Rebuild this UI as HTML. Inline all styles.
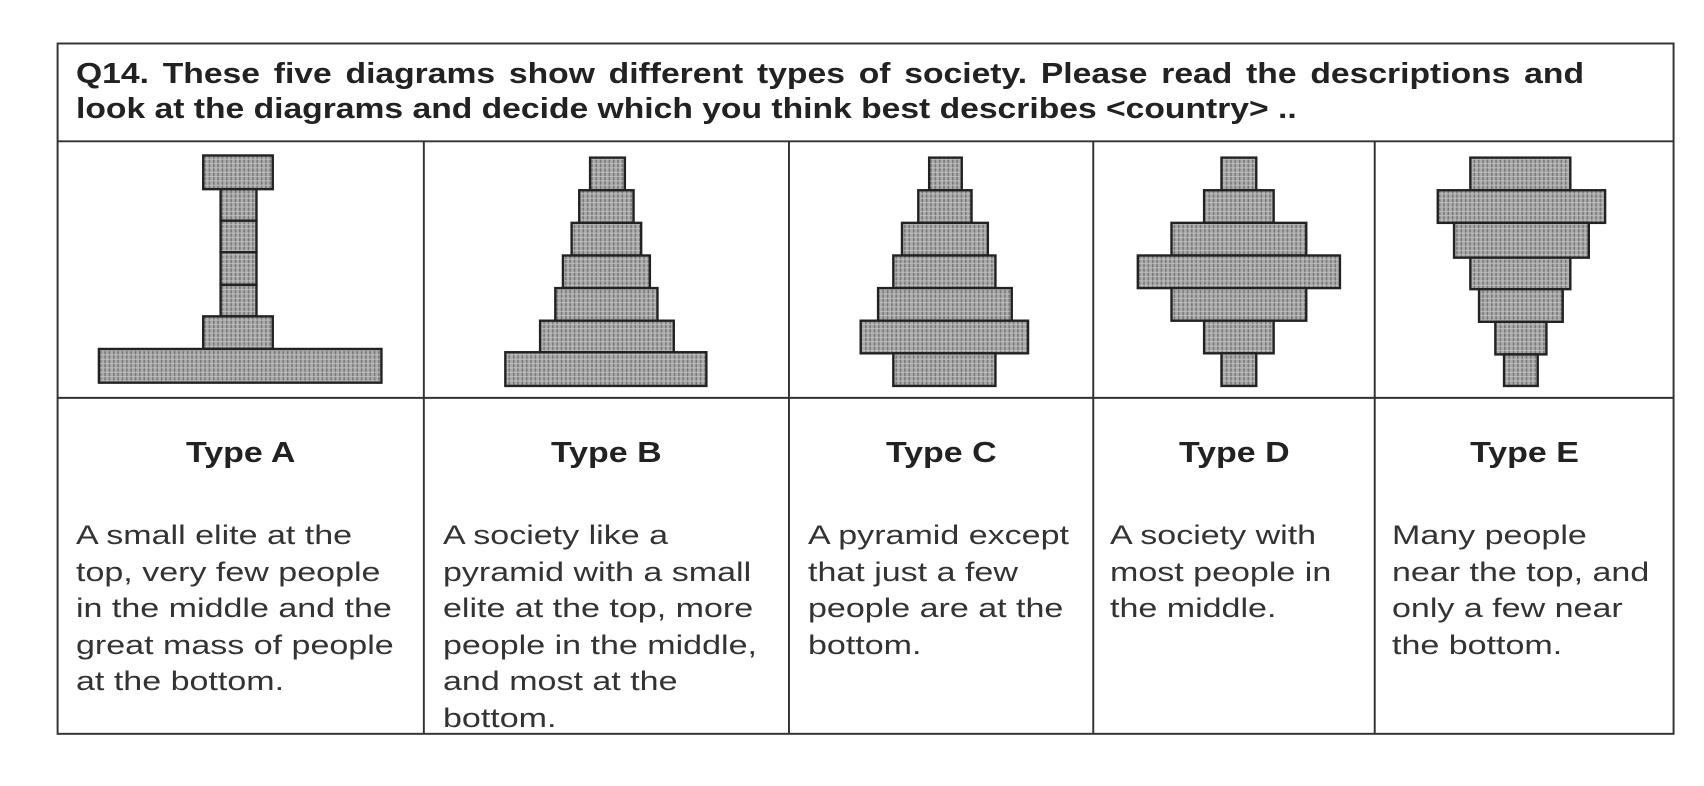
<!DOCTYPE html>
<html><head><meta charset="utf-8"><style>
html,body{margin:0;padding:0;background:#fff;width:1704px;height:786px;overflow:hidden}
.t{position:absolute;font-family:"Liberation Sans",Arial,sans-serif;color:#222;transform-origin:0 0}
.h{font-weight:bold;font-size:29px;left:76px;width:1300px;text-align:justify;text-align-last:justify;line-height:35px;top:57px;transform:scaleX(1.16)}
.h2{text-align-last:left}
.lab{font-weight:bold;font-size:29px;text-align:center;top:437px}
.lab span{display:inline-block;transform:scaleX(1.17)}
.d{font-size:27px;line-height:36.6px;top:517px;color:#333;transform:scaleX(1.26)}
</style></head><body>
<svg width="1704" height="786" viewBox="0 0 1568 723" preserveAspectRatio="none" style="position:absolute;left:0;top:0">
<defs><pattern id="p" width="4" height="4" patternUnits="userSpaceOnUse"><rect width="4" height="4" fill="#aaa"/><rect width="1.4" height="4" fill="#777"/><rect y="2" width="4" height="0.8" fill="#c4c4c4"/></pattern></defs>
<g fill="none" stroke="#333" stroke-width="1.8">
<rect x="53" y="40" width="1487" height="635"/>
<line x1="53" y1="130" x2="1540" y2="130"/>
<line x1="53" y1="366" x2="1540" y2="366"/>
<line x1="390" y1="130" x2="390" y2="675"/>
<line x1="726" y1="130" x2="726" y2="675"/>
<line x1="1006" y1="130" x2="1006" y2="675"/>
<line x1="1265" y1="130" x2="1265" y2="675"/>
</g>
<g fill="url(#p)" stroke="#222" stroke-width="2.2">
<rect x="187" y="143" width="64" height="31"/>
<rect x="203" y="174" width="33" height="29"/><rect x="203" y="203" width="33" height="29"/><rect x="203" y="232" width="33" height="30"/><rect x="203" y="262" width="33" height="29"/>
<rect x="187" y="291" width="64" height="30"/>
<rect x="91" y="321" width="260" height="31"/>

<rect x="543" y="145" width="32" height="30"/><rect x="533" y="175" width="50" height="30"/><rect x="526" y="205" width="64" height="30"/><rect x="518" y="235" width="80" height="30"/><rect x="511" y="265" width="94" height="30"/><rect x="497" y="295" width="123" height="29"/><rect x="465" y="324" width="185" height="31"/>

<rect x="855" y="145" width="30" height="30"/><rect x="845" y="175" width="49" height="30"/><rect x="830" y="205" width="79" height="30"/><rect x="822" y="235" width="94" height="30"/><rect x="808" y="265" width="123" height="30"/><rect x="792" y="295" width="154" height="30"/><rect x="822" y="325" width="94" height="30"/>

<rect x="1124" y="145" width="32" height="30"/><rect x="1108" y="175" width="64" height="30"/><rect x="1078" y="205" width="124" height="30"/><rect x="1047" y="235" width="186" height="30"/><rect x="1078" y="265" width="124" height="30"/><rect x="1108" y="295" width="64" height="30"/><rect x="1124" y="325" width="32" height="30"/>

<rect x="1353" y="145" width="92" height="30"/><rect x="1323" y="175" width="154" height="30"/><rect x="1338" y="205" width="124" height="32"/><rect x="1353" y="237" width="92" height="29"/><rect x="1361" y="266" width="77" height="30"/><rect x="1376" y="296" width="47" height="30"/><rect x="1384" y="326" width="31" height="29"/>
</g>
</svg>
<div class="t h">Q14. These five diagrams show different types of society. Please read the descriptions and</div>
<div class="t h h2" style="top:92px">look at the diagrams and decide which you think best describes &lt;country&gt; ..</div>
<div class="t lab" style="left:58px;width:366px"><span>Type A</span></div>
<div class="t lab" style="left:424px;width:365px"><span>Type B</span></div>
<div class="t lab" style="left:789px;width:304px"><span>Type C</span></div>
<div class="t lab" style="left:1093px;width:282px"><span>Type D</span></div>
<div class="t lab" style="left:1375px;width:298px"><span>Type E</span></div>
<div class="t d" style="left:76px">A small elite at the<br>top, very few people<br>in the middle and the<br>great mass of people<br>at the bottom.</div>
<div class="t d" style="left:443px">A society like a<br>pyramid with a small<br>elite at the top, more<br>people in the middle,<br>and most at the<br>bottom.</div>
<div class="t d" style="left:808px">A pyramid except<br>that just a few<br>people are at the<br>bottom.</div>
<div class="t d" style="left:1110px">A society with<br>most people in<br>the middle.</div>
<div class="t d" style="left:1392px">Many people<br>near the top, and<br>only a few near<br>the bottom.</div>
</body></html>
